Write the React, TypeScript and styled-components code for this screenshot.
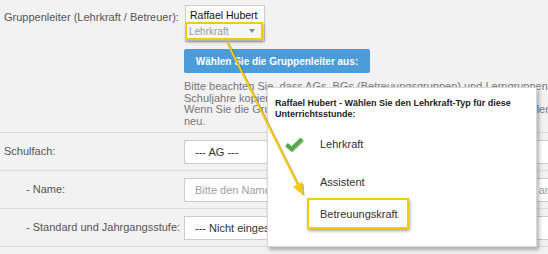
import styled, { createGlobalStyle } from 'styled-components';

const GlobalStyle = createGlobalStyle`
  html, body {
    margin: 0;
    padding: 0;
    background: #f2f2f2;
  }
  body {
    font-family: "Liberation Sans", Arial, sans-serif;
  }
`;

const ANNOTATION = '#f6cb05';

const App = () => {
  const options = [
    { label: 'Lehrkraft', checked: true },
    { label: 'Assistent' },
    { label: 'Betreuungskraft', marked: true }
  ];

  return (
    <Page>
      <GlobalStyle />

      {/* Gruppenleiter */}
      <FormRow $top>
        <RowLabel $top>Gruppenleiter (Lehrkraft / Betreuer):</RowLabel>
        <LeaderField>
          <PersonCard>
            <PersonName>Raffael Hubert</PersonName>
            <TypeSelect>
              Lehrkraft
              <Caret />
            </TypeSelect>
          </PersonCard>
          <ChooseButton type="button">Wählen Sie die Gruppenleiter aus:</ChooseButton>
          <Hint>
            Bitte beachten Sie, dass AGs, BGs (Betreuungsgruppen) und Lerngruppen nicht ins nächste
            <br />
            Schuljahre kopiert werden.
            <br />
            Wenn Sie die Gruppenleiter ändern, speichern Sie die Stunde erneut, teilen Sie die Gruppen
            <br />
            neu.
          </Hint>
        </LeaderField>
      </FormRow>

      <FormRow>
        <RowLabel>Schulfach:</RowLabel>
        <SelectBox>--- AG ---</SelectBox>
      </FormRow>

      <FormRow>
        <RowLabel $indent>- Name:</RowLabel>
        <TextInput readOnly placeholder="Bitte den Namen der Arbeitsgemeinschaft bzw. der Betreuungsgruppe angeben" />
      </FormRow>

      <FormRow>
        <RowLabel $indent>- Standard und Jahrgangsstufe:</RowLabel>
        <SelectBox>--- Nicht eingestellt ---</SelectBox>
      </FormRow>

      {/* Lehrkraft-Typ popup */}
      <Popup>
        <PopupTitle>Raffael Hubert - Wählen Sie den Lehrkraft-Typ für diese Unterrichtsstunde:</PopupTitle>
        <OptionList>
          {options.map((option) => (
            <Option key={option.label} $marked={option.marked}>
              {!option.marked && (
                <CheckSlot>
                  {option.checked && (
                    <svg width="20" height="16" viewBox="0 0 20 16">
                      <path d="M2.5 8.5 L7.5 13 L18 3" fill="none" stroke="rgba(0,0,0,0.25)" strokeWidth="4" transform="translate(0.8 1)" />
                      <path d="M2.5 8.5 L7.5 13 L18 3" fill="none" stroke="#52ad48" strokeWidth="4" />
                    </svg>
                  )}
                </CheckSlot>
              )}
              {option.label}
            </Option>
          ))}
        </OptionList>
      </Popup>

      {/* Annotation arrow */}
      <ArrowLayer width="548" height="254" viewBox="0 0 548 254">
        <g transform="translate(1.5 1.5)" opacity="0.3">
          <line x1="227" y1="42" x2="297.6" y2="184.3" stroke="#000" strokeWidth="2" />
          <polygon points="303,195 293.1,186.5 302.1,182" fill="#000" />
        </g>
        <line x1="227" y1="42" x2="297.6" y2="184.3" stroke={ANNOTATION} strokeWidth="2" />
        <polygon points="303,195 293.1,186.5 302.1,182" fill={ANNOTATION} />
      </ArrowLayer>
    </Page>
  );
};

const Page = styled.div`
  position: relative;
  width: 548px;
  height: 254px;
  overflow: hidden;
  background: #f2f2f2;
`;

const FormRow = styled.div<{ $top?: boolean }>`
  display: grid;
  grid-template-columns: 184px 1fr;
  align-items: ${({ $top }) => ($top ? 'start' : 'center')};
  height: ${({ $top }) => ($top ? 'auto' : '37px')};
  border-bottom: 1px solid #dcdcdc;
`;

const RowLabel = styled.div<{ $indent?: boolean; $top?: boolean }>`
  padding-left: ${({ $indent }) => ($indent ? 26 : 4)}px;
  padding-top: ${({ $top }) => ($top ? 11 : 0)}px;
  font-size: 11px;
  line-height: 13px;
  color: #555;
  white-space: nowrap;
`;

const LeaderField = styled.div`
  display: flex;
  flex-direction: column;
  align-items: flex-start;
  padding: 5px 0 5px;
  min-width: 0;
`;

const PersonCard = styled.div`
  box-sizing: border-box;
  width: 80px;
  margin-left: 1px;
  padding: 3px 1px 1px 0;
  background: #fff;
  border: 1px solid #cccccc;
`;

const PersonName = styled.div`
  padding-left: 4px;
  font-size: 10.5px;
  line-height: 13px;
  color: #111;
`;

const TypeSelect = styled.div`
  box-sizing: border-box;
  display: flex;
  align-items: center;
  justify-content: space-between;
  width: 78px;
  height: 18px;
  margin-left: -1px;
  padding: 0 6px 0 2px;
  border: 2px solid ${ANNOTATION};
  background: #f6f6f6;
  box-shadow: 1px 2px 3px rgba(0, 0, 0, 0.35);
  font-size: 10px;
  color: #9a9a9a;
`;

const Caret = styled.span`
  width: 0;
  height: 0;
  border-left: 3.5px solid transparent;
  border-right: 3.5px solid transparent;
  border-top: 4px solid #888;
`;

const ChooseButton = styled.button`
  box-sizing: border-box;
  width: 186px;
  height: 24px;
  margin-top: 7px;
  padding: 0 11px;
  border: none;
  border-radius: 2px;
  background: #4b9cd8;
  color: #fff;
  font-family: inherit;
  font-size: 10px;
  font-weight: 700;
  text-align: center;
`;

const Hint = styled.p`
  margin: 8px 0 0;
  font-size: 11px;
  line-height: 11.5px;
  color: #777;
  white-space: nowrap;
`;

const SelectBox = styled.div`
  box-sizing: border-box;
  width: 420px;
  height: 24px;
  padding-left: 10px;
  border: 1px solid #cccccc;
  background: #fff;
  font-size: 11px;
  line-height: 22px;
  color: #333;
  white-space: nowrap;
`;

const TextInput = styled.input`
  box-sizing: border-box;
  width: 420px;
  height: 24px;
  margin: 0;
  padding: 0 0 0 10px;
  border: 1px solid #cccccc;
  background: #fff;
  font-family: inherit;
  font-size: 11px;
  color: #333;
  outline: none;

  &::placeholder {
    color: #a0a0a0;
  }
`;

const Popup = styled.div`
  position: absolute;
  left: 267px;
  top: 87px;
  box-sizing: border-box;
  width: 270px;
  height: 160px;
  background: #fff;
  border: 1px solid #d8d8d8;
  box-shadow: 2px 3px 4px rgba(0, 0, 0, 0.3);
`;

const PopupTitle = styled.div`
  padding: 10px 8px 0 7px;
  font-size: 9px;
  font-weight: 700;
  line-height: 10.5px;
  color: #222;
`;

const OptionList = styled.div`
  display: flex;
  flex-direction: column;
  margin-top: 6px;
`;

const Option = styled.div<{ $marked?: boolean }>`
  box-sizing: border-box;
  display: flex;
  align-items: center;
  height: ${({ $marked }) => ($marked ? 31 : 38)}px;
  width: ${({ $marked }) => ($marked ? '102px' : 'auto')};
  margin: ${({ $marked }) => ($marked ? '-3px 0 0 39px' : '0')};
  padding-left: ${({ $marked }) => ($marked ? 11 : 0)}px;
  border: ${({ $marked }) => ($marked ? `2px solid ${ANNOTATION}` : 'none')};
  box-shadow: ${({ $marked }) => ($marked ? '1px 2px 3px rgba(0, 0, 0, 0.35)' : 'none')};
  font-size: 11px;
  color: #333;
`;

const CheckSlot = styled.div`
  display: flex;
  align-items: center;
  width: 52px;
  padding-left: 16px;
  box-sizing: border-box;
`;

const ArrowLayer = styled.svg`
  position: absolute;
  left: 0;
  top: 0;
  pointer-events: none;
`;

export default App;
